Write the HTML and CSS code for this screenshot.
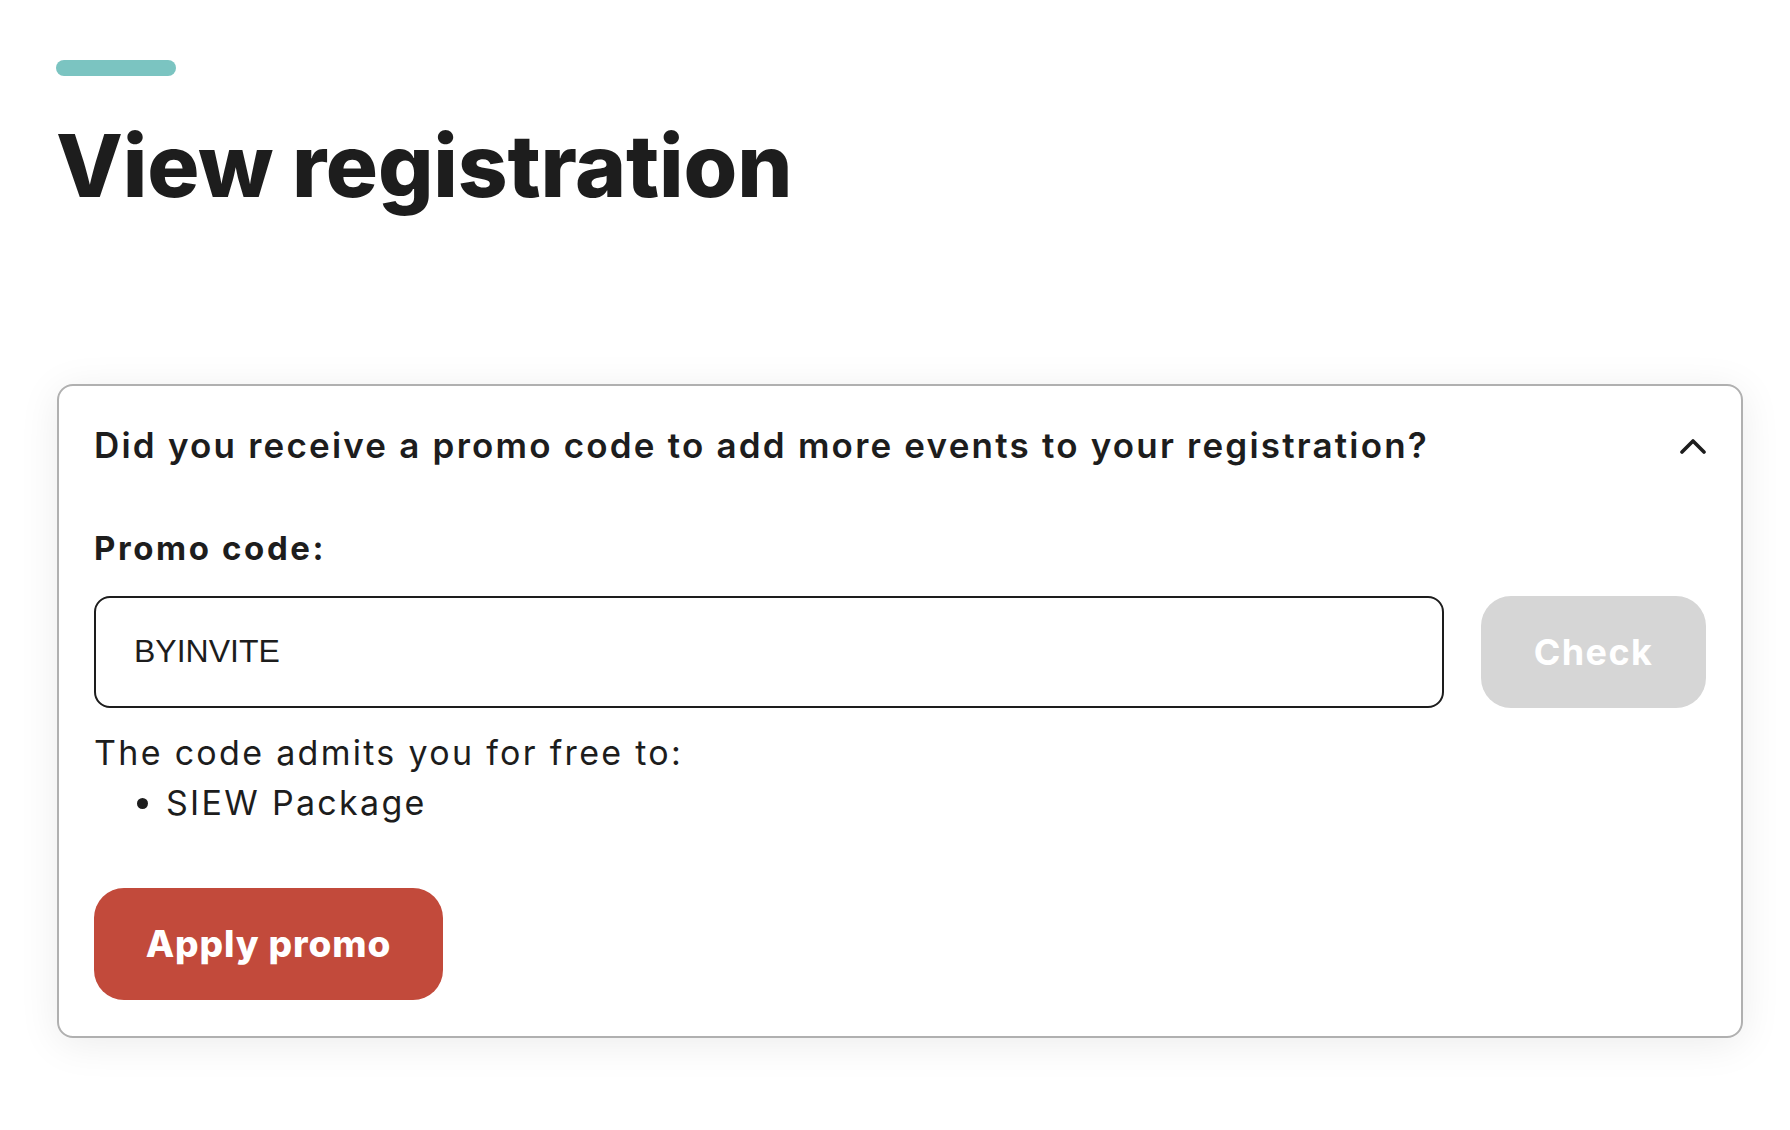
FILE: index.html
```html
<!DOCTYPE html>
<html lang="en">
<head>
  <meta charset="UTF-8" />
  <title>View registration</title>
  <link rel="stylesheet" href="styles.css">
</head>
<body>
  <main class="page">
    <div class="accent"></div>
    <h1 class="title">View registration</h1>

    <section class="promo-card">
      <div class="promo-head">
        <h2>Did you receive a promo code to add more events to your registration?</h2>
        <button class="toggle" aria-label="Collapse">
          <svg width="26" height="16" viewBox="0 0 26 16">
            <path d="M2 14 L13 3 L24 14" fill="none" stroke="#1d1d1d" stroke-width="3.6" stroke-linecap="round" stroke-linejoin="round" />
          </svg>
        </button>
      </div>

      <label class="field-label" for="promo">Promo code:</label>
      <div class="code-row">
        <input id="promo" class="code-input" type="text" value="BYINVITE">
        <button class="check-btn" disabled>Check</button>
      </div>

      <p class="admits">The code admits you for free to:</p>
      <ul class="admits-list">
        <li>SIEW Package</li>
      </ul>

      <button class="apply-btn">Apply promo</button>
    </section>
  </main>
</body>
</html>
```

FILE: styles.css
```css
body {
  margin: 0;
  background-color: #ffffff;
  color: #1d1d1d;
  font-family: 'Inter', 'Noto Sans', sans-serif;
}
.page {
  padding: 60px 47px 60px 56px;
}
.accent {
  width: 120px;
  height: 16px;
  border-radius: 8px;
  background-color: #7bc4c1;
}
.title {
  margin: 38px 0 0;
  font-size: 87px;
  font-weight: 800;
  line-height: 1.2;
  letter-spacing: -0.2px;
}
.promo-card {
  margin-top: 166px;
  margin-left: 1px;
  border: 2px solid #b0b0b0;
  border-radius: 16px;
  padding: 35px 35px 36px;
  box-shadow: 0 6px 40px rgba(0, 0, 0, 0.08);
}
.promo-head {
  display: flex;
  align-items: center;
  justify-content: space-between;
}
.promo-head h2 {
  margin: 0;
  font-size: 35px;
  font-weight: 600;
  line-height: 1.4;
  letter-spacing: 2.2px;
}
.toggle {
  background: none;
  border: none;
  padding: 0;
  display: flex;
}
.field-label {
  display: block;
  margin-top: 55px;
  font-size: 33px;
  font-weight: 700;
  line-height: 1.4;
  letter-spacing: 2.6px;
}
.code-row {
  display: flex;
  gap: 37px;
  margin-top: 24px;
}
.code-input {
  flex: 1;
  height: 112px;
  box-sizing: border-box;
  border: 2px solid #1d1d1d;
  border-radius: 16px;
  padding: 0 38px;
  font-family: 'Liberation Sans', Arial, sans-serif;
  font-size: 32px;
  color: #1d1d1d;
  outline: none;
}
.check-btn {
  width: 225px;
  height: 112px;
  border: none;
  border-radius: 30px;
  background-color: #d6d6d6;
  color: #ffffff;
  font-family: 'Inter', sans-serif;
  font-size: 36px;
  font-weight: 700;
  letter-spacing: 1.4px;
}
.admits {
  margin: 20px 0 0;
  font-size: 34px;
  line-height: 50px;
  letter-spacing: 2.3px;
}
.admits-list {
  margin: 0;
  padding-left: 72px;
  font-size: 34px;
  line-height: 50px;
  letter-spacing: 2.3px;
}
.apply-btn {
  margin-top: 60px;
  width: 349px;
  height: 112px;
  border: none;
  border-radius: 30px;
  background-color: #c24a3b;
  color: #ffffff;
  font-family: 'Inter', sans-serif;
  font-size: 37px;
  font-weight: 800;
  letter-spacing: 0.9px;
  cursor: pointer;
}
```
